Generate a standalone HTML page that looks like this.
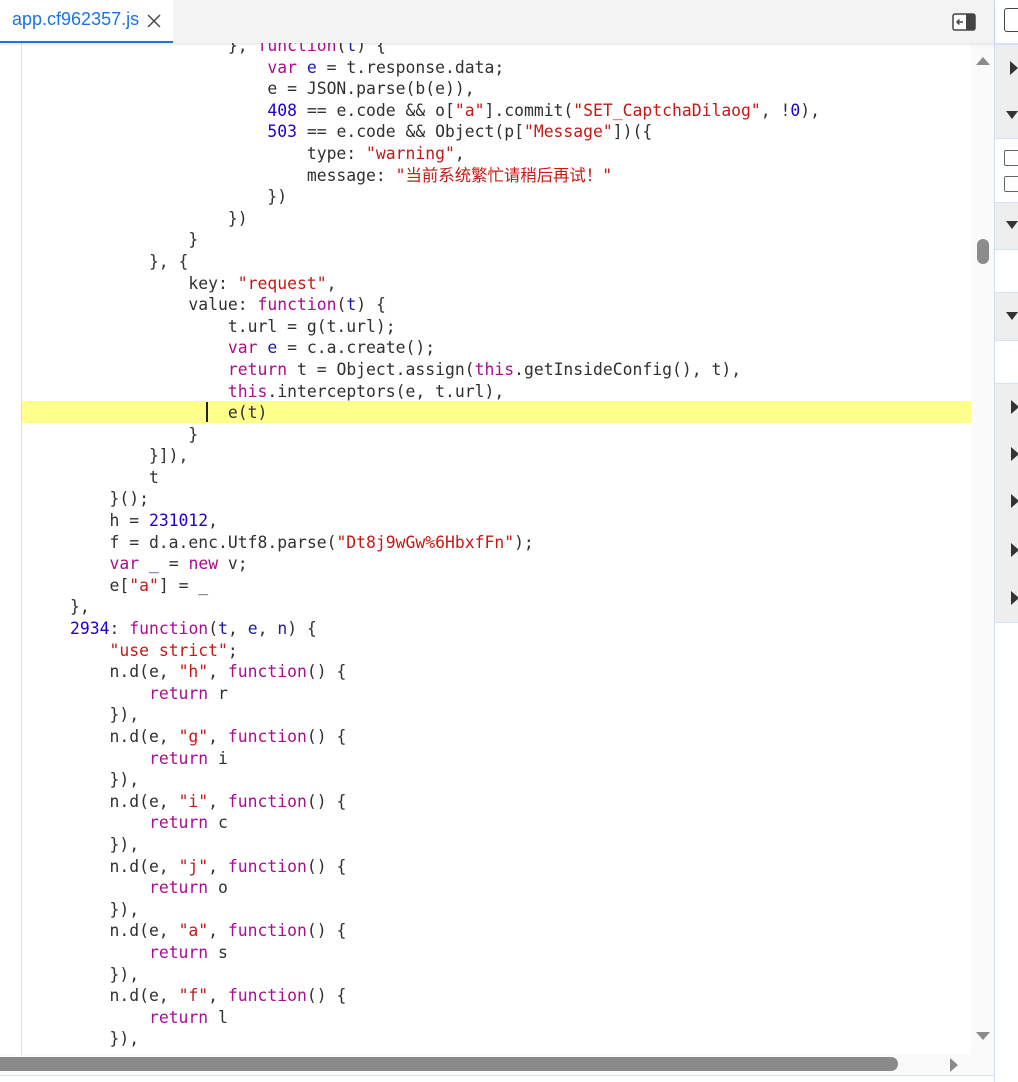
<!DOCTYPE html>
<html><head><meta charset="utf-8"><style>
*{margin:0;padding:0;box-sizing:border-box}
body{width:1018px;height:1082px;overflow:hidden;background:#fff;position:relative;font-family:"Liberation Sans",sans-serif}
.tabbar{position:absolute;left:0;top:0;width:994px;height:43px;background:#f3f3f3;box-shadow:0 1px 3px rgba(0,0,0,.12);z-index:3}
.tab{position:absolute;left:0;top:0;width:173px;height:43px;background:#fff;border-bottom:2px solid #1a73e8;color:#1a73e8;font-size:18px;padding:9px 0 0 12px}
.gut{position:absolute;left:21px;top:43px;width:1px;height:1012px;background:#d4e2fa}
.hl{position:absolute;left:22px;top:401px;width:949px;height:22px;background:#ffff8c}
.cur{position:absolute;left:206px;top:402px;width:1.5px;height:20px;background:#222}
pre{position:absolute;left:70px;top:35px;font-family:"DejaVu Sans Mono","Liberation Mono",monospace;font-size:16.4px;line-height:21.6px;color:#303030;z-index:1}
.k{color:#aa0d91}.s{color:#c41a16}.n{color:#1c00cf}.v{color:#1a1aa6}
.vtrack{position:absolute;left:971px;top:43px;width:23px;height:1012px;background:#fafafa}
.thumb{position:absolute;left:977px;top:239px;width:12px;height:25px;border-radius:6px;background:#8c8c8c}
.htrack{position:absolute;left:0;top:1055px;width:994px;height:20px;background:#fafafa}
.hthumb{position:absolute;left:0;top:1057px;width:898px;height:14px;border-radius:0 7px 7px 0;background:#8a8a8a}
.rp{position:absolute;left:994px;top:0;width:24px;height:1082px;border-left:1px solid #d0ddf6;background:#fff}
.sec{position:absolute;left:995px;width:23px;background:#eeeeee;border-top:1px solid #d6e2fb;border-bottom:1px solid #d6e2fb}
</style></head><body>
<div class="tabbar"><div class="tab">app.cf962357.js</div>
<svg style="position:absolute;left:146px;top:13px" width="16" height="16"><path d="M2 2L14 14M14 2L2 14" stroke="#444" stroke-width="1.4"/></svg>
<svg style="position:absolute;left:952px;top:13px" width="24" height="18"><rect x="1" y="1" width="22" height="16" rx="2" fill="#fff" stroke="#444" stroke-width="1.5"/><rect x="14" y="1" width="9" height="16" fill="#444"/><path d="M11 9H5M7.5 6.5L5 9l2.5 2.5" stroke="#444" stroke-width="1.5" fill="none"/></svg>
</div>
<div class="gut"></div>
<div class="hl"></div><div class="cur"></div>
<div class="vtrack"></div><div class="thumb"></div>
<svg style="position:absolute;left:975px;top:55px" width="16" height="12"><path d="M1 10L8 2L15 10Z" fill="#8a8a8a"/></svg>
<svg style="position:absolute;left:975px;top:1030px" width="16" height="12"><path d="M1 2L8 10L15 2Z" fill="#8a8a8a"/></svg>
<div class="htrack"></div><div class="hthumb"></div>
<svg style="position:absolute;left:948px;top:1057px" width="12" height="16"><path d="M2 1L10 8L2 15Z" fill="#8a8a8a"/></svg>
<div style="position:absolute;left:0;top:1075px;width:994px;height:1px;background:#d6e2fb"></div>
<pre>                }, <span class="k">function</span>(<span class="v">t</span>) {
                    <span class="k">var</span> <span class="v">e</span> = t.response.data;
                    e = JSON.parse(b(e)),
                    <span class="n">408</span> == e.code &amp;&amp; o[<span class="s">"a"</span>].commit(<span class="s">"SET_CaptchaDilaog"</span>, !<span class="n">0</span>),
                    <span class="n">503</span> == e.code &amp;&amp; Object(p[<span class="s">"Message"</span>])({
                        type: <span class="s">"warning"</span>,
                        message: <span class="s">"当前系统繁忙请稍后再试！"</span>
                    })
                })
            }
        }, {
            key: <span class="s">"request"</span>,
            value: <span class="k">function</span>(<span class="v">t</span>) {
                t.url = g(t.url);
                <span class="k">var</span> <span class="v">e</span> = c.a.create();
                <span class="k">return</span> t = Object.assign(<span class="k">this</span>.getInsideConfig(), t),
                <span class="k">this</span>.interceptors(e, t.url),
                e(t)
            }
        }]),
        t
    }();
    h = <span class="n">231012</span>,
    f = d.a.enc.Utf8.parse(<span class="s">"Dt8j9wGw%6HbxfFn"</span>);
    <span class="k">var</span> <span class="v">_</span> = <span class="k">new</span> v;
    e[<span class="s">"a"</span>] = _
},
<span class="n">2934</span>: <span class="k">function</span>(<span class="v">t</span>, <span class="v">e</span>, <span class="v">n</span>) {
    <span class="s">"use strict"</span>;
    n.d(e, <span class="s">"h"</span>, <span class="k">function</span>() {
        <span class="k">return</span> r
    }),
    n.d(e, <span class="s">"g"</span>, <span class="k">function</span>() {
        <span class="k">return</span> i
    }),
    n.d(e, <span class="s">"i"</span>, <span class="k">function</span>() {
        <span class="k">return</span> c
    }),
    n.d(e, <span class="s">"j"</span>, <span class="k">function</span>() {
        <span class="k">return</span> o
    }),
    n.d(e, <span class="s">"a"</span>, <span class="k">function</span>() {
        <span class="k">return</span> s
    }),
    n.d(e, <span class="s">"f"</span>, <span class="k">function</span>() {
        <span class="k">return</span> l
    }),</pre>
<div class="rp"></div>
<div style="position:absolute;left:995px;top:43px;width:23px;height:1px;background:#d6e2fb"></div>
<div style="position:absolute;left:1004px;top:8px;width:14px;height:24px;border:1.5px solid #444;border-right:none;border-radius:3px 0 0 3px"></div>
<div class="sec" style="top:44px;height:95px"></div>
<svg style="position:absolute;left:1010px;top:61px" width="8" height="14"><path d="M0 0L8 7L0 14Z" fill="#333"/></svg>
<svg style="position:absolute;left:1006px;top:111px" width="12" height="9"><path d="M0 0H12L6 8Z" fill="#333"/></svg>
<div style="position:absolute;left:1004px;top:150px;width:16px;height:16px;border:1.5px solid #666;border-radius:2px;background:#fff"></div>
<div style="position:absolute;left:1004px;top:176px;width:16px;height:16px;border:1.5px solid #666;border-radius:2px;background:#fff"></div>
<div class="sec" style="top:202px;height:48px"></div>
<svg style="position:absolute;left:1006px;top:221px" width="12" height="9"><path d="M0 0H12L6 8Z" fill="#333"/></svg>
<div class="sec" style="top:292px;height:49px"></div>
<svg style="position:absolute;left:1006px;top:312px" width="12" height="9"><path d="M0 0H12L6 8Z" fill="#333"/></svg>
<div class="sec" style="top:383px;height:240px"></div>
<svg style="position:absolute;left:1011px;top:400px" width="8" height="14"><path d="M0 0L8 7L0 14Z" fill="#333"/></svg>
<svg style="position:absolute;left:1011px;top:447px" width="8" height="14"><path d="M0 0L8 7L0 14Z" fill="#333"/></svg>
<svg style="position:absolute;left:1011px;top:494px" width="8" height="14"><path d="M0 0L8 7L0 14Z" fill="#333"/></svg>
<svg style="position:absolute;left:1011px;top:543px" width="8" height="14"><path d="M0 0L8 7L0 14Z" fill="#333"/></svg>
<svg style="position:absolute;left:1011px;top:591px" width="8" height="14"><path d="M0 0L8 7L0 14Z" fill="#333"/></svg>
</body></html>
